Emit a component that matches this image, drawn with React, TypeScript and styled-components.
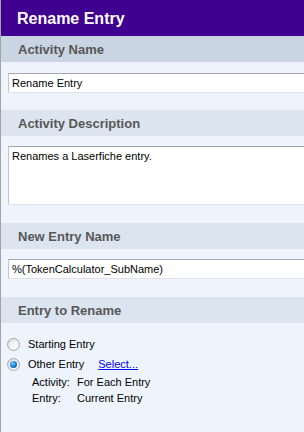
import React from 'react';
import styled, { createGlobalStyle } from 'styled-components';

const GlobalStyle = createGlobalStyle`
  html, body {
    margin: 0;
    padding: 0;
    width: 304px;
    height: 432px;
    overflow: hidden;
    background: #eef4fd;
  }
  * {
    box-sizing: border-box;
  }
`;

const Panel = styled.div`
  width: 304px;
  height: 432px;
  overflow: hidden;
  background: #eef4fd;
  border-left: 1px solid #a3a3a3;
  font-family: 'Liberation Sans', Arial, sans-serif;
  font-size: 11px;
  color: #000;
`;

const TitleBar = styled.div`
  height: 36px;
  background: #400090;
  color: #fff;
  font-size: 16px;
  font-weight: bold;
  display: flex;
  align-items: center;
  padding-left: 16px;
  padding-top: 1px;
`;

const SectionHeader = styled.div<{ $active?: boolean }>`
  height: 26px;
  background: ${(p) => (p.$active ? '#c9d5e2' : '#dce5ef')};
  color: #575757;
  font-size: 13px;
  font-weight: bold;
  display: flex;
  align-items: center;
  padding-left: 17px;
`;

const SectionBody = styled.div<{ $top?: number; $bottom?: number }>`
  padding: ${(p) => p.$top ?? 10}px 0 ${(p) => p.$bottom ?? 18}px 7px;
`;

const TextBox = styled.div<{ $multi?: boolean }>`
  width: 320px;
  height: ${(p) => (p.$multi ? '59px' : '20px')};
  background: #fff;
  border: 1px solid;
  border-color: #a3a7ad #dfe3e8 #dfe3e8 #c3c7cc;
  padding: ${(p) => (p.$multi ? '3px 3px' : '0 3px')};
  display: flex;
  align-items: ${(p) => (p.$multi ? 'flex-start' : 'center')};
  white-space: nowrap;
`;

const OptionList = styled.div`
  padding: 11px 0 0 6px;
  display: flex;
  flex-direction: column;
`;

const RadioRow = styled.div`
  height: 20px;
  display: flex;
  align-items: center;
`;

const RadioCircle = styled.span<{ $checked?: boolean }>`
  width: 13px;
  height: 13px;
  border-radius: 50%;
  border: 1px solid #a9a9a9;
  background: radial-gradient(circle at 60% 65%, #ffffff 0%, #f2f2f2 40%, #d4d4d4 100%);
  display: flex;
  align-items: center;
  justify-content: center;
  margin-right: 8px;
  flex-shrink: 0;

  &::after {
    content: '';
    display: ${(p) => (p.$checked ? 'block' : 'none')};
    width: 7px;
    height: 7px;
    border-radius: 50%;
    background: radial-gradient(circle at 40% 35%, #7fd0ff 0%, #1a8ad8 45%, #07407a 100%);
  }
`;

const Link = styled.a`
  color: #0000ff;
  text-decoration: underline;
  margin-left: 14px;
  cursor: pointer;
`;

const InfoGrid = styled.div`
  display: grid;
  grid-template-columns: 45px auto;
  padding-left: 25px;
  margin-top: 0;
  line-height: 16px;
`;

export default function App() {
  return (
    <>
      <GlobalStyle />
      <Panel>
        <TitleBar>Rename Entry</TitleBar>

        <SectionHeader $active>Activity Name</SectionHeader>
        <SectionBody $top={11} $bottom={17}>
          <TextBox>Rename Entry</TextBox>
        </SectionBody>

        <SectionHeader>Activity Description</SectionHeader>
        <SectionBody $top={10} $bottom={18}>
          <TextBox $multi>Renames a Laserfiche entry.</TextBox>
        </SectionBody>

        <SectionHeader>New Entry Name</SectionHeader>
        <SectionBody $top={10} $bottom={18}>
          <TextBox>%(TokenCalculator_SubName)</TextBox>
        </SectionBody>

        <SectionHeader>Entry to Rename</SectionHeader>
        <OptionList>
          <RadioRow>
            <RadioCircle />
            Starting Entry
          </RadioRow>
          <RadioRow>
            <RadioCircle $checked />
            Other Entry
            <Link>Select...</Link>
          </RadioRow>
          <InfoGrid>
            <span>Activity:</span>
            <span>For Each Entry</span>
            <span>Entry:</span>
            <span>Current Entry</span>
          </InfoGrid>
        </OptionList>
      </Panel>
    </>
  );
}
